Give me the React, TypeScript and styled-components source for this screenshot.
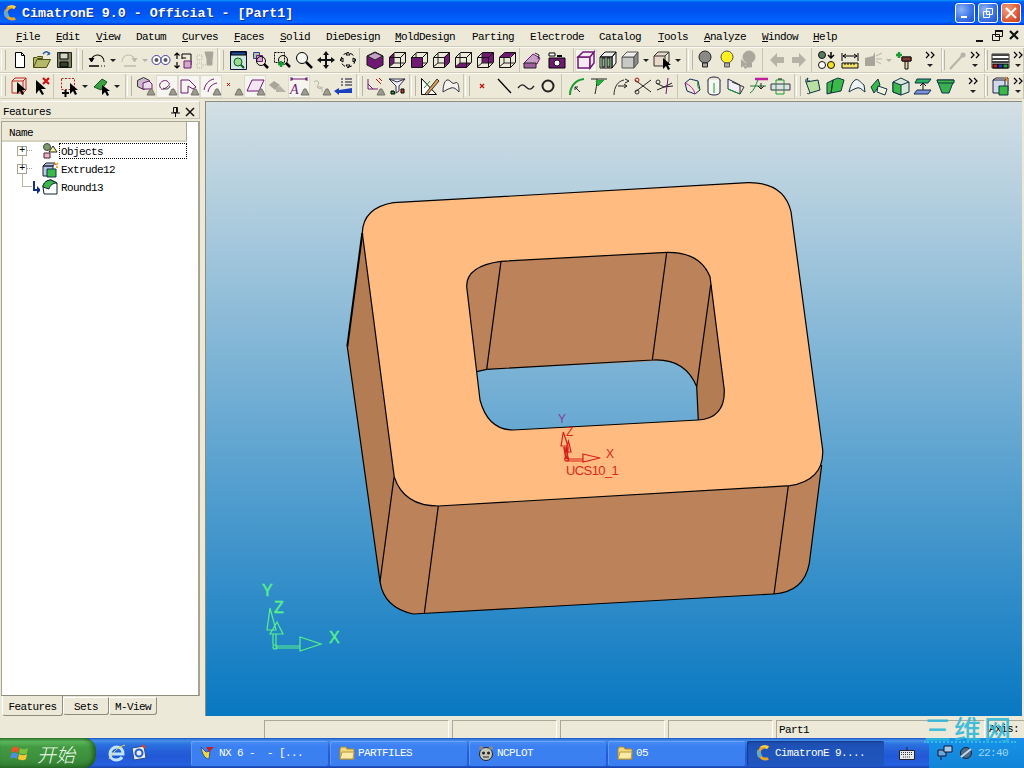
import React from "react";
import styled, { createGlobalStyle } from "styled-components";

const Global = createGlobalStyle`
  html, body { margin: 0; padding: 0; background: #ece9d8; }
  * { box-sizing: border-box; }
`;

const mono = `"Liberation Mono", "DejaVu Sans Mono", monospace`;

const Root = styled.div`
  position: relative;
  width: 1024px;
  height: 768px;
  overflow: hidden;
  display: flex;
  flex-direction: column;
  background: #ece9d8;
  font-family: ${mono};
  font-size: 11px;
  letter-spacing: -0.6px;
  color: #000;
`;

/* ---------- title bar ---------- */
const TitleBar = styled.div`
  height: 25px;
  flex: none;
  display: flex;
  align-items: center;
  padding: 0 3px 0 3px;
  background: linear-gradient(#0997ff 0, #0058ee 9%, #0050ee 40%, #0066ff 86%, #005bff 92%, #003dd7 96%, #003dd7 100%);
`;
const TitleText = styled.div`
  margin-left: 3px;
  padding-top: 2px;
  font-size: 13.3px;
  font-weight: bold;
  letter-spacing: 0;
  color: #fff;
  white-space: pre;
  text-shadow: 1px 1px 0 #0f2f9c;
  flex: 1;
`;
const WinButton = styled.div<{ $close?: boolean }>`
  width: 20px;
  height: 20px;
  margin-left: 3px;
  border: 1px solid #fff;
  border-radius: 3px;
  display: flex;
  align-items: center;
  justify-content: center;
  background: ${(p) =>
    p.$close
      ? "radial-gradient(circle at 30% 30%, #f0a080, #e2603a 55%, #c0391a)"
      : "radial-gradient(circle at 30% 30%, #8db4f5, #3e74e6 55%, #2250c8)"};
`;

/* ---------- menu ---------- */
const MenuBar = styled.div`
  height: 22px;
  flex: none;
  display: flex;
  align-items: center;
  padding-left: 16px;
  border-bottom: 1px solid #d0cdbc;
`;
const MenuItem = styled.div<{ $w: number }>`
  width: ${(p) => p.$w}px;
  flex: none;
  white-space: pre;
  padding-top: 2px;
  u { text-underline-offset: 1px; }
`;
const MenuControls = styled.div`
  margin-left: auto;
  display: flex;
  align-items: center;
  padding-right: 1px;
  gap: 1px;
`;

/* ---------- toolbars ---------- */
const ToolRow = styled.div`
  height: 26px;
  flex: none;
  display: flex;
  border-top: 1px solid #fbfaf5;
  border-bottom: 1px solid #cfccba;
`;
const Band = styled.div<{ $w: number }>`
  width: ${(p) => p.$w}px;
  flex: none;
  display: flex;
  align-items: center;
  border-right: 1px solid #c8c5b3;
`;
const Lead = styled.div<{ $w: number; $grip?: boolean }>`
  width: ${(p) => p.$w}px;
  flex: none;
  height: 20px;
  display: flex;
  justify-content: flex-end;
  padding-right: ${(p) => Math.max(p.$w - 6, 1)}px;
  &::before {
    content: "";
    display: ${(p) => (p.$grip ? "block" : "none")};
    width: 3px;
    border-left: 1px solid #fff;
    border-right: 1px solid #b8b5a4;
    background: #ece9d8;
  }
`;
const ToolButton = styled.div<{ $w: number; $on?: boolean }>`
  width: ${(p) => p.$w}px;
  height: 23px;
  flex: none;
  display: flex;
  align-items: center;
  justify-content: center;
  background: ${(p) => (p.$on ? "#f6f5ef" : "transparent")};
  box-shadow: ${(p) => (p.$on ? "inset 0 0 0 1px #dcdacb" : "none")};
`;

/* ---------- main ---------- */
const Main = styled.div`
  flex: 1;
  min-height: 0;
  display: flex;
  padding: 2px 2px 0 0;
`;
const Panel = styled.div`
  width: 200px;
  flex: none;
  display: flex;
  flex-direction: column;
  padding-left: 1px;
`;
const PanelHeader = styled.div`
  height: 18px;
  flex: none;
  padding: 3px 4px 0 2px;
  display: flex;
  align-items: center;
  justify-content: space-between;
  border-top: 1px solid #fff;
  border-bottom: 1px solid #c8c5b3;
  border-right: 1px solid #c8c5b3;
`;
const HeaderIcons = styled.div`
  display: flex;
  gap: 4px;
`;
const TreeBox = styled.div`
  flex: 1;
  min-height: 0;
  margin-top: 2px;
  background: #fff;
  border: 1px solid #a6a392;
  border-right-width: 2px;
  border-bottom: 1px solid #8f8c7c;
`;
const ColumnHeader = styled.div`
  width: 185px;
  height: 20px;
  padding: 3px 0 0 7px;
  display: flex;
  align-items: center;
  background: #ece9d8;
  border-bottom: 2px solid #d6d2c0;
  border-right: 1px solid #aca899;
`;
const TreeRow = styled.div`
  height: 18px;
  display: flex;
  align-items: center;
`;
const Indent = styled.div`
  width: 38px;
  flex: none;
  height: 18px;
  position: relative;
`;
const Expander = styled.div`
  position: absolute;
  left: 15px;
  top: 4px;
  width: 10px;
  height: 10px;
  background: #fff;
  border: 1px solid #a6a392;
  display: flex;
  align-items: center;
  justify-content: center;
  font-size: 10px;
  line-height: 1;
  z-index: 1;
  &::after {
    content: "";
    position: absolute;
    left: 9px;
    top: 3px;
    width: 5px;
    border-top: 1px dotted #a6a392;
  }
`;
const TreeLine = styled.div<{ $h: number; $top?: number; $elbow?: boolean }>`
  position: absolute;
  left: 20px;
  top: ${(p) => p.$top ?? 0}px;
  height: ${(p) => p.$h}px;
  width: 10px;
  border-left: 1px solid #b8b5a4;
  border-bottom: ${(p) => (p.$elbow ? "1px solid #b8b5a4" : "none")};
`;
const Label = styled.div<{ $focus?: boolean }>`
  width: 128px;
  height: 16px;
  padding: 2px 0 0 1px;
  border: 1px dotted ${(p) => (p.$focus ? "#000" : "transparent")};
  white-space: pre;
`;
const TreeIcon = styled.div`
  width: 19px;
  flex: none;
  display: flex;
  justify-content: flex-end;
`;
const ArrowGlyph = styled.svg`
  display: block;
`;
const Tabs = styled.div`
  height: 20px;
  flex: none;
  display: flex;
  padding-left: 1px;
`;
const Tab = styled.div<{ $w: number; $on?: boolean }>`
  width: ${(p) => p.$w}px;
  height: ${(p) => (p.$on ? 20 : 18)}px;
  display: flex;
  align-items: center;
  justify-content: center;
  padding-top: ${(p) => (p.$on ? 2 : 1)}px;
  margin-top: ${(p) => (p.$on ? 0 : 1)}px;
  border: 1px solid #8f8c7c;
  border-left-color: #fff;
  border-top-color: #fff;
  border-radius: 0 0 3px 3px;
  border-top-width: ${(p) => (p.$on ? 0 : 1)}px;
  background: #ece9d8;
`;
const Viewport = styled.div`
  flex: 1;
  margin-left: 5px;
  min-width: 0;
  background: linear-gradient(#d3dfe4, #0878c2);
  border-left: 1px solid #8f8c7c;
  border-top: 1px solid #8f8c7c;
`;
const ModelSvg = styled.svg`
  display: block;
  width: 100%;
  height: 100%;
`;

/* ---------- status ---------- */
const StatusBar = styled.div`
  height: 22px;
  flex: none;
  display: flex;
  align-items: flex-end;
  padding-left: 264px;
  gap: 3px;
`;
const StatusCell = styled.div<{ $w: number }>`
  width: ${(p) => p.$w}px;
  height: 18px;
  flex: none;
  padding: 3px 0 0 2px;
  white-space: pre;
  border-top: 1px solid #aca899;
  border-left: 1px solid #aca899;
  border-right: 1px solid #fff;
`;

/* ---------- task bar ---------- */
const TaskBar = styled.div`
  height: 30px;
  flex: none;
  display: flex;
  align-items: stretch;
  color: #fff;
  background: linear-gradient(#1f4fc0 0, #3682e5 6%, #4490e6 10%, #3883e5 14%, #2b71e0 22%, #2663da 40%, #2258d5 60%, #245ddb 82%, #2562df 88%, #2158d4 93%, #1941a5 100%);
`;
const StartButton = styled.div`
  width: 96px;
  flex: none;
  display: flex;
  align-items: center;
  padding-left: 10px;
  gap: 7px;
  border-radius: 0 12px 12px 0;
  background: linear-gradient(#3a8a3a 0, #5cb85c 12%, #429a42 30%, #3c8f3c 70%, #2f7a2f 100%);
  box-shadow: inset -3px 0 4px rgba(0, 40, 0, 0.5);
`;
const StartText = styled.span`
  font-family: "Noto Sans CJK SC", sans-serif;
  font-size: 19px;
  font-weight: 300;
  font-style: italic;
  letter-spacing: 0;
  color: #f4fff0;
`;
const Quick = styled.div`
  width: 95px;
  flex: none;
  display: flex;
  align-items: center;
  padding-left: 11px;
  gap: 2px;
`;
const TaskButtons = styled.div`
  display: flex;
  gap: 2px;
  align-items: center;
`;
const TaskButton = styled.div<{ $on?: boolean }>`
  width: 137px;
  height: 25px;
  display: flex;
  align-items: center;
  gap: 3px;
  padding-left: 9px;
  border-radius: 2px;
  white-space: pre;
  background: ${(p) =>
    p.$on
      ? "linear-gradient(#1b4aa8, #1e52b7 20%, #1f56bf)"
      : "linear-gradient(#4a8cf5, #3c81f3 20%, #3a7ef0)"};
  box-shadow: ${(p) => (p.$on ? "inset 1px 1px 1px #143c8c" : "inset 1px 1px 0 rgba(255,255,255,.2)")};
`;
const Keyboard = styled.div`
  width: 45px;
  flex: none;
  display: flex;
  align-items: center;
  justify-content: center;
`;
const Tray = styled.div`
  flex: 1;
  display: flex;
  align-items: center;
  gap: 4px;
  padding-left: 8px;
  background: linear-gradient(#1e8ee8, #1590e6 20%, #1284d8);
  color: #9fd6f8;
`;
const Watermark = styled.div`
  position: absolute;
  left: 924px;
  top: 716px;
  width: 92px;
  height: 27px;
  font-family: "Noto Sans CJK SC", sans-serif;
  font-size: 27px;
  font-weight: 500;
  line-height: 25px;
  letter-spacing: 3px;
  white-space: pre;
  color: rgba(44, 183, 217, 0.9);
  border-bottom: 2px dotted rgba(60, 200, 230, 0.8);
`;
const AxisText = styled.div`
  position: absolute;
  left: 989px;
  top: 723px;
  white-space: pre;
`;

/* ---------- drawing helpers ---------- */
const Ico: React.FC<{ w?: number; h?: number; children: React.ReactNode }> = ({ w = 22, h = 22, children }) => (
  <svg width={w} height={h} viewBox={`0 0 ${w} ${h}`} fill="none">
    {children}
  </svg>
);
const P: React.FC<{ d: string; s?: string; f?: string; w?: number; dash?: string }> = ({ d, s = "#000", f = "none", w = 1, dash }) => (
  <path d={d} stroke={s} fill={f} strokeWidth={w} strokeDasharray={dash} />
);
const purple = "#701a73";
const Cube: React.FC<{ front?: string; top?: string; right?: string; left?: string; bottom?: string; back?: string }> = ({ front, top, right, left, bottom, back }) => (
  <>
    {back && <P d="M8 4h11v10H8z" f={back} s="none" />}
    {left && <P d="M3 8l5-4v10l-5 4z" f={left} s="none" />}
    {bottom && <P d="M3 18l5-4h11l-5 4z" f={bottom} s="none" />}
    <P d="M8 4v10h11M8 14l-5 4" s="#222" />
    {front && <P d="M3 8h11v10H3z" f={front} s="none" />}
    {top && <P d="M3 8l5-4h11l-5 4z" f={top} s="none" />}
    {right && <P d="M14 8l5-4v10l-5 4z" f={right} s="none" />}
    <P d="M3.5 8.5h11v10h-11zM3.5 8.5l5-5h11l-5 5M14.5 18.5l5-5v-10" s="#111" />
  </>
);
const Marker = () => <P d="M13 20l3-6h2l3 6z" f="#9c9a8e" s="#77756a" />;
const Bulb: React.FC<{ f: string; s?: string }> = ({ f, s = "#222" }) => (
  <>
    <circle cx="11" cy="8" r="6" fill={f} stroke={s} />
    <P d="M8.500 14h5v4h-5z" f="#aaa89c" s={s} />
  </>
);
const Logo: React.FC<{ size?: number }> = ({ size = 16 }) => (
  <svg width={size} height={size} viewBox="0 0 16 16">
    <path d="M13 1.500A7.500 7.500 0 1 0 13 14.500L11 12A4.500 4.500 0 1 1 11 4z" fill="#eda423" />
    <path d="M13 1.500A7.500 7.500 0 0 0 3 2.800 7 7 0 0 1 11 4z" fill="#f8d040" />
    <path d="M3 13A7.500 7.500 0 0 1 2 4L5 8 6 11z" fill="#6aa8c0" />
  </svg>
);
const Folder = () => (
  <svg width="16" height="14" viewBox="0 0 16 14">
    <path d="M1 3l1-2h5l1 2h7v10H1z" fill="#f4d67a" stroke="#a88a30" />
    <path d="M1 13l2-7h12l-1 7z" fill="#fbe9a8" stroke="#b89838" />
  </svg>
);

const icons: Record<string, React.ReactNode> = {
  new: <><P d="M6.500 3.500h6l3 3v12h-9z" f="#fff" /><P d="M12.500 3.500v3h3" /></>,
  open: <><P d="M2.500 18.500v-10h3l1-1h5v2h-5l-4 9h13l4-8h-13" f="#b5b76a" s="#504f10" /><P d="M12 5c2-3 5-3 6 0" s="#2a5aa0" w={1.500} /><P d="M16 6l3-1-1-2" s="#2a5aa0" /></>,
  save: <><P d="M4.500 3.500h14v15h-14z" f="#7e8264" s="#222" /><P d="M7 4h8v6H7z" f="#d8d8c8" /><P d="M7 13h8v5H7z" f="#3a3c2c" /></>,
  undo: <><P d="M5 12a6 6 0 1 1 13 1" w={1.100} /><P d="M3 9l2.500 4 2.500-4" f="#000" s="#000" /><P d="M3 17h10" w={1.500} /><P d="M15 17h1M18 17h1" /></>,
  redo: <><P d="M17 12a6 6 0 1 0-13 1" s="#bdbbae" w={1.100} /><P d="M19 9l-2.500 4-2.500-4" f="#bdbbae" s="#bdbbae" /><P d="M6 17h12" s="#bdbbae" w={1.500} /></>,
  glasses: <><circle cx="6.500" cy="11" r="4.500" fill="#fff" stroke="#3a3a9c" /><circle cx="15.500" cy="11" r="4.500" fill="#fff" stroke="#3a3a9c" /><circle cx="6.500" cy="11" r="2" fill="#556" /><circle cx="15.500" cy="11" r="2" fill="#556" /></>,
  swap: <><P d="M5 4v6M2.500 6.500L5 4l2.500 2.500M5 19v-6M2.500 16.500L5 19l2.500-2.500" w={1.200} /><P d="M10 5h9v11" /><P d="M10 5v5" /><P d="M12 12h7v7h-7z" f="#d0a8c8" s={purple} /><P d="M10 9h4" /></>,
  swapOff: <><P d="M3 6h5v5H3zM3 14h5v5H3z" s="#b9b7a8" dash="1 1" /><P d="M11 3h8l-1 8v5h-5v-6z" f="#a8a69a" s="#a8a69a" /><P d="M9 16h8" s="#b9b7a8" dash="1 1" /></>,
  screen: <><P d="M3.500 2.500h16v18h-16z" f="#cfe8d8" s="#114" /><P d="M4 3h15v3H4z" f="#2050a0" /><circle cx="11" cy="13" r="4" fill="#9bd890" stroke="#0a5a30" /><P d="M14 16l3 3" s="#0a5a30" w={2} /></>,
  zoomSel: <><P d="M4.500 3.500h6v6h-6z" f="#a8c8a0" s="#3a3a9c" /><P d="M7.500 6.500h6v6h-6z" f="#d0a8d0" s={purple} /><circle cx="12" cy="12" r="4.500" stroke="#000" /><P d="M15 15l4 4" w={2.500} /></>,
  zoomAdd: <><P d="M3.500 3.500h10v10h-10z" dash="2 1" /><circle cx="12" cy="11" r="4.500" stroke="#000" /><P d="M15 14l4 4" w={2.500} /><P d="M7 15h6M10 12v6" s="#1a9a30" w={2.500} /></>,
  zoom: <><circle cx="9" cy="9" r="5.500" stroke="#000" fill="#f8f8f4" /><P d="M13 13l6 6" w={2.500} /></>,
  move: <P d="M11 2l3 4h-2v4h4V8l4 3-4 3v-2h-4v4h2l-3 4-3-4h2v-4H6v2l-4-3 4-3v2h4V6H8z" f="#111" s="none" />,
  orbit: <><P d="M11 3l2 3h-4zM11 19l2-3H9zM3 11l3-2v4zM19 11l-3-2v4z" f="#fff" /><circle cx="11" cy="11" r="7" stroke="#000" strokeDasharray="4 3" /></>,
  cube1: <><P d="M3 7l8-4 8 4v9l-8 4-8-4z" f={purple} s="#111" /><P d="M3.500 7l7.500-3.500 7.500 3.500-7.500 4z" f="#c8a0c8" s="#222" /></>,
  cube2: <Cube left={purple} />,
  cube3: <Cube front={purple} />,
  cube4: <Cube right={purple} />,
  cube5: <Cube bottom={purple} />,
  cube6: <Cube back={purple} />,
  cube7: <Cube top={purple} />,
  sect: <><P d="M3 14l9-9 7 4-3 6H3z" f="#c8a0c8" s={purple} /><P d="M3 14h12v5H3z" f="#a060a0" s="#222" /><P d="M14 4l4 2-1 4" s="#222" /></>,
  cam: <><P d="M3 9h16v10H3z" f={purple} /><circle cx="11" cy="14" r="3" fill="#fff" stroke="#111" /><P d="M3 4h6v3H3z" f="#fff" /><P d="M11 7h5" w={2} /></>,
  shaded: <><P d="M3 8h12v11H3z" f="#f5e9f3" s={purple} w={1.500} /><P d="M3 8l5-5h11l-4 5zM15 8l4-5v11l-4 5z" f="#f5e9f3" s={purple} w={1.500} /></>,
  hidden: <><P d="M3 8h12v11H3zM3 8l5-5h11l-4 5zM15 8l4-5v11l-4 5z" s="#111" f="#eee" /><P d="M5 9h3v9H5zM10 9h3v9h-3z" f="#7ab87a" s="#111" /></>,
  gcube: <><P d="M3 8h12v11H3z" f="#c8c8c4" s="#555" /><P d="M3 8l5-5h11l-4 5z" f="#eee" s="#555" /><P d="M15 8l4-5v11l-4 5z" f="#8a8a86" s="#555" /></>,
  gcubeArrow: <><P d="M3 7h11v10H3zM3 7l4-4h11l-4 4M14 17l4-4V3" s="#333" f="#e8d8c8" /><P d="M12 9v11l3-3 2 4 2-1-2-4h3z" f="#000" s="none" /></>,
  bulbGray: <Bulb f="#8a8a84" />,
  bulbYellow: <Bulb f="#fff020" s="#555" />,
  bulbOff: <><Bulb f="#aaa89c" s="#aaa89c" /><P d="M3 10v9l2-2 2 3 2-1-2-3h3z" f="#aaa89c" s="none" /></>,
  left: <P d="M4 11l7-7v4h7v6h-7v4z" f="#b5b3a6" s="none" />,
  right: <P d="M18 11l-7-7v4H4v6h7v4z" f="#b5b3a6" s="none" />,
  balls: <><circle cx="6" cy="6" r="3.500" fill="#5a7a60" stroke="#111" /><circle cx="6" cy="16" r="3.500" fill="#fff" stroke="#111" /><circle cx="15" cy="16" r="3.500" fill="#f4e020" stroke="#111" /><P d="M15 3v6M12 6l3 3 3-3" w={1.500} /></>,
  ruler: <><P d="M3 4v8M19 4v8M4 7h14M7 5l-3 2 3 2M15 5l3 2-3 2" /><P d="M3 14h16v5H3z" f="#f0e070" s="#111" /><P d="M6 14v2M9 14v2M12 14v2M15 14v2" /></>,
  smoke: <><P d="M3 9l8-2 2-4v14H3z" f="#a8a69a" s="none" /><P d="M14 7l6-3M14 10h6M14 12l5 3" s="#b5b3a6" /></>,
  hammer: <><P d="M8 8h9v4H8zM11 12h3v8h-3z" f="#e8d0a0" s="#111" /><P d="M8 8h9v4H8z" f="#803830" s="#111" /><P d="M2 6h6M5 3v6" s="#1a9a30" w={2.500} /></>,
  wand: <><P d="M4 20L16 7" s="#b5b3a6" w={2} /><circle cx="17" cy="6" r="2.500" fill="#b5b3a6" /></>,
  grid: <><P d="M3 5h17v14H3z" f="#fff" s="#333" /><P d="M3 5h17v2H3zM3 9h17v2H3zM3 12h17v2H3z" f="#444" s="none" /><P d="M4 15h5v4H4z" f="#c02020" /><P d="M9 15h5v4H9z" f="#2040c0" /><P d="M14 15h5v4h-5z" f="#20a040" /></>,
  pick: <><P d="M4 6h11v12H4zM4 6l3-3h11l-3 3M15 18l3-3V3" s="#c02020" /><P d="M9 7v12l3-3 2 4 2-1-2-4h4z" f="#000" s="none" /></>,
  clear: <><P d="M6 5v14l3-4 3 5 2-1-3-5h5z" f="#000" s="none" /><P d="M13 3l6 6M19 3l-6 6" s="#d01010" w={2.200} /></>,
  boxAdd: <><P d="M3.500 3.500h13v11h-13z" s="#b02020" dash="2 1.500" /><P d="M12 8v11l3-3 2 4 2-1-2-4h3z" f="#000" s="none" /><P d="M4 18h7M7.500 15v7" w={2} /></>,
  pin: <><P d="M4 12l8-8 5 3-6 8z" f="#3aa040" s="#145a20" /><P d="M12 10v10l3-3 2 4 2-1-2-4h3z" f="#000" s="none" /></>,
  f1: <><P d="M3.500 5.500l6-3 6 3v6l-6 3-6-3z" f="#cbb8cb" s="#333" /><P d="M9 8l6-2 3 3v5H9z" f="#e8dde8" s={purple} /><Marker /></>,
  f2: <><P d="M4 12c-2-4 4-8 7-6s3 4 0 6-5 4-7 0" s={purple} /><P d="M7 13c3 2 6 1 7-2" s="#333" /><Marker /></>,
  f3: <><P d="M3 5h8l7 7-3 2-5-3v7H3z" s={purple} /><Marker /></>,
  f4: <><P d="M4 15C5 9 9 5 14 4M8 17c1-5 4-8 9-9" s={purple} /><Marker /></>,
  f5: <><P d="M5 8l3 3M8 8l-3 3" s="#c01010" /><Marker /></>,
  f6: <><P d="M3 16L8 5h12l-5 11z" s={purple} f="#f5e5f5" /><Marker /></>,
  f7: <><P d="M3 10l5-4 6 4-5 5z" f="#a8a69a" s="none" /><P d="M10 13l4-2 6 6H10z" f="#b5b3a6" s="none" /></>,
  f8: <><P d="M3 4h16M3 2v4M19 2v4" s={purple} /><P d="M5 5l-2-1 2-1M17 5l2-1-2-1" s={purple} /><text x="2" y="19" fontFamily="Liberation Serif, serif" fontSize="14" fontStyle="italic" fill={purple}>A</text><Marker /></>,
  f9: <><P d="M4 7c3-3 6 0 4 3s2 5 5 2M7 13c3-3 6 0 5 4" s="#b5b3a6" /><Marker /></>,
  f10: <><P d="M9 4h2M13 4h7M9 7h2M13 7h7M9 10h2M13 10h7" s="#113" /><P d="M20 13v5H7v2l-5-4 5-3v2z" f="#1a40c0" s="none" /></>,
  g1: <><P d="M4 4v10h10M4 9l5 5" s={purple} /><P d="M12 4l5 5M15 3l3 3" s="#c01010" /><Marker /></>,
  g2: <><P d="M3 4h16l-6 7v5l-3 2v-7z" f="#f0f0f8" s="#334" /><P d="M3 4l8 3 8-3" s="#334" /><P d="M5 16h3l1 3H5z" f="#1a9a30" /><P d="M15 14h3v4h-3z" f="#c04020" /></>,
  h1: <><P d="M3.500 3.500v16h15z" f="#fff" /><P d="M7 19L19 4l2 2L9 20z" f="#e0a050" s="#333" /><P d="M12 6l-6 7" s="#1a9a30" /></>,
  h2: <P d="M3 17c0-5 1-11 4-12s5 5 8 3 4 2 4 9c-3-3-5-5-8-4s-5 2-8 4z" s="#334" f="#f4f2ea" />,
  dot: <P d="M9 9l4 4M13 9l-4 4" s="#c01010" w={1.300} />,
  line: <P d="M5 4l13 14" w={1.300} />,
  wave: <P d="M3 13c3-4 5-4 8-1s5 3 8-1" s="#222" w={1.300} />,
  circle: <circle cx="11" cy="11" r="5.500" stroke="#222" strokeWidth="2" />,
  k1: <><P d="M4 20C4 12 9 5 18 4" s="#1a9a30" w={2} /><P d="M9 12l5 5M9 15v-3h3" s="#223" /></>,
  k2: <><P d="M3 4h16" s="#222" /><P d="M9 4c0 5-1 10-2 15" s="#222" /><P d="M8 6l8-1-6 6z" f="#2ab040" s="#1a9a30" /></>,
  k3: <><P d="M4 20C4 12 8 6 14 5" s="#333" /><P d="M15 4l4 2-4 2M8 11h9M14 9l3 2-3 2" s="#222" /></>,
  k4: <><P d="M3 5l16 12M19 5L3 17" s="#222" /><circle cx="5" cy="17" r="2" stroke="#333" /><circle cx="5" cy="5" r="2" stroke="#c01010" /></>,
  k5: <><P d="M2 8l8 4 8-4M3 15l7-3 9-1" s="#222" /><P d="M14 3l-2 16" s={purple} /><circle cx="4" cy="7" r="2" stroke="#333" /></>,
  l1: <><P d="M4 8l5-4 8 2 2 9-5 4-8-3z" s="#1a2a60" /><P d="M4 8c5 2 9 6 10 11" s="#c020a0" /><P d="M17 6c-1 4 0 7 2 9" s="#1a9a30" /></>,
  l2: <><ellipse cx="11" cy="5" rx="6" ry="3" stroke="#224" /><P d="M5 5v12c0 4 12 4 12 0V5" s="#224" f="#f4f8f0" /><P d="M11 8v10" s="#1a9a30" /></>,
  l3: <><P d="M3 4l12 6v9L3 14z" s="#224" f="#f0f0f8" /><P d="M7 7l12 5-4 7" s="#333" /><P d="M3 14l12 5" s="#1a9a30" /></>,
  l4: <><P d="M8 4h13" s="#c020a0" w={2.500} /><P d="M3 18c4-2 6-9 8-13M3 11h16" s="#1a7a30" /><P d="M14 8v6M11 11l3 3 3-3" s="#222" /></>,
  l5: <><P d="M2 9h19v6H2z" s="#334" f="#e0e0e8" /><P d="M7 5h8v14H7z" s="#1a9a30" /><P d="M9 4h4" s="#111" /></>,
  m1: <><P d="M4 7l12-2 2 10-10 3z" f="#b8e0a0" s="#134" /><P d="M4 7c-1-2 0-3 2-4M6 3l-1 3 3 0" s="#134" /><P d="M8 18c-1 1-2 1-3 0" s="#134" /></>,
  m2: <P d="M3 8l6-3-2 13-4 1zM9 5l5-2 6 2-3 11-10 2z" f="#3ab848" s="#134" />,
  m3: <P d="M3 17c1-5 3-10 6-12s6 3 9 5l1 7c-3-2-5-5-8-4s-5 2-8 4z" f="#eef4f4" s="#134" />,
  m4: <><P d="M3 12l7-8 2 6-6 8z" f="#3ab848" s="#134" /><P d="M10 11l9 3-2 6-8-3z" f="#f4f4e4" s="#134" /></>,
  m5: <><P d="M3 7l8-4 8 4v10l-8 3-8-3z" f="#d8e8d8" s="#134" /><P d="M3 7l8 3v10l-8-3z" f="#3ab848" s="#134" /><P d="M11 10l8-3" s="#134" /></>,
  m6: <><P d="M5 4h14l-3 4H3z" f="#2ab060" s="#134" /><P d="M5 15h14l-3 4H2z" f="#8090e0" s="#134" /><P d="M11 8v7M8 11l3-3 3 3" s="#111" /></>,
  m7: <><P d="M3 5h17l-5 13H8z" f="#38b050" s="#134" /><P d="M3 5h17v3H4z" f="#3ab848" s="#134" /></>,
  add: <><P d="M4 5h12v13H4z" f="#d0d8ec" s="#224" /><P d="M4 5l3-2h12l-3 2M16 18l3-2V3" s="#224" /><P d="M10 11h9v9h-9z" f="#3ab848" s="#134" /><P d="M16 2l2 2M19 4l-2 2" s="#e09010" w={1.500} /></>,
};

const caretIcon = <Ico w={10}><P d="M2 10h6l-3 3z" f="#222" s="none" /></Ico>;
const caretOff = <Ico w={10}><P d="M2 10h6l-3 3z" f="#b5b3a6" s="none" /></Ico>;
const chevIcon = (
  <Ico w={16}>
    <P d="M3 3l3 3-3 3M8 3l3 3-3 3" w={1.200} />
    <P d="M4 15h6l-3 3z" f="#222" s="none" />
  </Ico>
);

type Bandspec = { w: number; lead: number; grip?: boolean; items: string[] };
const n = (...names: string[]) => names;

const row1: Bandspec[] = [
  { w: 77, lead: 9, grip: true, items: n("new", "open", "save") },
  { w: 141, lead: 9, grip: true, items: n("undo", "^", "redo", "^off", "glasses", "swap", "swapOff") },
  { w: 142, lead: 9, grip: true, items: n("screen", "zoomSel", "zoomAdd", "zoom", "move", "orbit") },
  { w: 160, lead: 4, items: n("cube1", "cube2", "cube3", "cube4", "cube5", "cube6", "cube7") },
  { w: 54, lead: 1, items: n("sect", "~3", "cam") },
  { w: 113, lead: 0, items: n("*shaded", "hidden", "gcube", "^", "gcubeArrow", "^") },
  { w: 76, lead: 7, grip: true, items: n("bulbGray", "bulbYellow", "bulbOff") },
  { w: 49, lead: 3, items: n("left", "right") },
  { w: 130, lead: 4, items: n("balls", "~1", "ruler", "~1", "smoke", "^off", "hammer", "~7", "chev") },
  { w: 43, lead: 4, grip: true, items: n("wand", "chev") },
  { w: 39, lead: 4, grip: true, items: n("grid", "chev") },
];

const row2: Bandspec[] = [
  { w: 54, lead: 8, grip: true, items: n("pick", "clear") },
  { w: 72, lead: 4, items: n("boxAdd", "^", "pin", "^") },
  { w: 231, lead: 8, grip: true, items: n("f1", "*f2", "*f3", "*f4", "f5", "*f6", "f7", "*f8", "f9", "f10") },
  { w: 53, lead: 7, grip: true, items: n("g1", "g2") },
  { w: 54, lead: 8, grip: true, items: n("h1", "h2") },
  { w: 98, lead: 7, grip: true, items: n("dot", "line", "wave", "circle") },
  { w: 116, lead: 4, items: n("k1", "k2", "k3", "k4", "k5") },
  { w: 117, lead: 3, items: n("l1", "l2", "l3", "l4", "l5") },
  { w: 190, lead: 7, grip: true, items: n("m1", "m2", "m3", "m4", "m5", "m6", "m7", "~10", "chev") },
  { w: 39, lead: 4, grip: true, items: n("add", "chev") },
];

const Tool: React.FC<{ name: string }> = ({ name }) => {
  if (name.startsWith("~")) return <ToolButton $w={Number(name.slice(1))} />;
  if (name === "^") return <ToolButton $w={10}>{caretIcon}</ToolButton>;
  if (name === "^off") return <ToolButton $w={10}>{caretOff}</ToolButton>;
  if (name === "chev") return <ToolButton $w={16}>{chevIcon}</ToolButton>;
  const on = name.startsWith("*");
  const key = on ? name.slice(1) : name;
  return (
    <ToolButton $w={22} $on={on}>
      <Ico>{icons[key]}</Ico>
    </ToolButton>
  );
};

const Toolbar: React.FC<{ bands: Bandspec[] }> = ({ bands }) => (
  <ToolRow>
    {bands.map((b, i) => (
      <Band key={i} $w={b.w}>
        <Lead $w={b.lead} $grip={b.grip} />
        {b.items.map((it, j) => (
          <Tool key={j} name={it} />
        ))}
      </Band>
    ))}
  </ToolRow>
);

const menus: [string, string, number][] = [
  ["", "File", 40], ["", "Edit", 40], ["", "View", 40], ["Datum", "", 46], ["", "Curves", 52],
  ["", "Faces", 46], ["", "Solid", 46], ["DieDesign", "", 69], ["", "MoldDesign", 77], ["Parting", "", 58],
  ["Electrode", "", 69], ["Catalog", "", 59], ["", "Tools", 46], ["", "Analyze", 58], ["", "Window", 51], ["", "Help", 30],
];

const Model = () => {
  const top = "#ffbb80";
  const side = "#bc825a";
  const sideDark = "#b47c52";
  const e = "#000";
  const outer =
    "M362.300 233 Q363 208 393.300 202.700 L748 182.700 Q784 182 791 211.700 L822.700 450 Q824 480 790 485.700 L438.300 506 Q404 506 394.300 477.300 Z";
  const hole =
    "M501 261.300 L667 252.300 Q700 252 710 276.700 L724.300 390 Q725 418 698.300 420 L513.300 430 Q488 430 480 400 L466.700 286.700 Q466 266 501 261.300 Z";
  return (
    <ModelSvg viewBox="206 102 816 614" preserveAspectRatio="none">
      <path d="M362.300 233 L347.300 346.700 L380 581.700 Q384 608 413.300 614 L773.300 594 Q804 592 809.300 563.300 L821.700 465 L790 485.700 L438.300 506 L394.300 477.300 Z" fill={side} />
      <path d="M362.300 233 L347.300 346.700 L380 581.700 L394 477.300 Z" fill={sideDark} />
      <path d={outer} fill={top} />
      <clipPath id="holeClip"><path d={hole} /></clipPath>
      <g clipPath="url(#holeClip)">
        <rect x="206" y="102" width="816" height="614" fill="url(#holeBg)" />
        <path d="M460 240 L730 240 L730 430 L698 420 L696.700 386.700 Q688 362 660 360.700 L486.700 369.300 L476.700 371.700 Z" fill={side} />
        <path d="M710.700 285 L730 285 L730 425 L698 420 L696.700 386.700 Z" fill={sideDark} />
      </g>
      <defs>
        <linearGradient id="holeBg" x1="0" y1="102" x2="0" y2="716" gradientUnits="userSpaceOnUse">
          <stop offset="0" stopColor="#d3dfe4" />
          <stop offset="1" stopColor="#0878c2" />
        </linearGradient>
      </defs>
      <g fill="none" stroke={e} strokeWidth="1.200">
        <path d={outer} />
        <path d={hole} />
        <path d="M362.300 233 L347.300 346.700" strokeWidth="2" />
        <path d="M347.300 346.700 L380 581.700 Q384 608 413.300 614 L773.300 594 Q804 592 809.300 563.300 L821.700 465" />
        <path d="M394 477.300 L380 581.700 M438.300 506 L424.300 613.300 M788.300 486 L774 594" />
        <path d="M501 261.300 L486.700 369.300 M666.700 252.300 L652.300 360 M476.700 371.700 L486.700 369.300 L652.300 360 Q685 358 696.700 386.700 L698.300 420 M710.700 285 L696.700 386.700" />
      </g>
      <g fill="none" stroke="#d8201a" strokeWidth="1.200">
        <path d="M566.700 459 h16 M566.700 461 h16 M583 454 L600 458 L583 462 Z M561 446 L563.300 432 L568 446 Z" />
        <path d="M565 452 L568.500 441 L571 452 Z" />
        <path d="M564 447 L566 459 M566 447 L568 459 M568 447 L567 459" strokeWidth="1.600" />
        <circle cx="566.700" cy="459" r="2" />
      </g>
      <g fontFamily="Liberation Sans, sans-serif" fontSize="12" fill="#d8281c">
        <text x="558" y="423" fill="#8a4098">Y</text>
        <text x="566" y="436">Z</text>
        <text x="606" y="458">X</text>
        <text x="566" y="475" fontSize="13">UCS10_1</text>
      </g>
      <g fill="none" stroke="#58f088" strokeWidth="1.200">
        <path d="M275 646 h25 M275 648 h25 M300 637 L321 644 L300 651 Z M267 630 L270 608 L276 630 Z M270 634 L277 622 L283 634 Z M273 634 V645 M276 634 V645" />
        <circle cx="275" cy="647" r="2" />
      </g>
      <g fontFamily="Liberation Sans, sans-serif" fontSize="16" fill="#58f088" stroke="#58f088" strokeWidth="0.400">
        <text x="262" y="596">Y</text>
        <text x="274" y="613">Z</text>
        <text x="329" y="643">X</text>
      </g>
    </ModelSvg>
  );
};

const App = () => (
  <Root>
    <Global />
    <TitleBar>
      <Logo />
      <TitleText>CimatronE 9.0 - Official - [Part1]</TitleText>
      <WinButton>
        <svg width="14" height="14"><path d="M3 10h6v2H3z" fill="#fff" /></svg>
      </WinButton>
      <WinButton>
        <svg width="14" height="14" fill="none" stroke="#fff"><path d="M5.500 2.500h6v6h-6zM2.500 5.500h6v6h-6z" /></svg>
      </WinButton>
      <WinButton $close>
        <svg width="14" height="14" stroke="#fff" strokeWidth="2"><path d="M2 2l10 10M12 2L2 12" /></svg>
      </WinButton>
    </TitleBar>
    <MenuBar>
      {menus.map(([plain, ul, w]) => (
        <MenuItem key={plain + ul} $w={w}>
          {plain || (
            <>
              <u>{ul[0]}</u>
              {ul.slice(1)}
            </>
          )}
        </MenuItem>
      ))}
      <MenuControls>
        <svg width="16" height="14"><path d="M3 11h7v2H3z" fill="#111" /></svg>
        <svg width="16" height="14" fill="none" stroke="#111"><path d="M5.500 1.500h7v6h-7zM2.500 5.500h7v6h-7z" fill="#ece9d8" /><path d="M5 2h8" strokeWidth="2" /></svg>
        <svg width="16" height="14" stroke="#111" strokeWidth="2.200"><path d="M3 2l8 8M11 2l-8 8" /></svg>
      </MenuControls>
    </MenuBar>
    <Toolbar bands={row1} />
    <Toolbar bands={row2} />
    <Main>
      <Panel>
        <PanelHeader>
          <span>Features</span>
          <HeaderIcons>
            <svg width="12" height="12" fill="none" stroke="#111"><path d="M4.500 1.500h4v5h-4zM2 7h9M6.500 7v4" /><path d="M7.500 2v4" /></svg>
            <svg width="10" height="12" stroke="#111" strokeWidth="1.500"><path d="M1 2l8 8M9 2l-8 8" /></svg>
          </HeaderIcons>
        </PanelHeader>
        <TreeBox>
          <ColumnHeader>Name</ColumnHeader>
          <TreeRow>
            <Indent><TreeLine $h={36} $top={9} /><Expander>+</Expander></Indent>
            <TreeIcon>
              <svg width="18" height="16" fill="none">
                <circle cx="6" cy="4" r="3.500" fill="#7d9a6a" stroke="#444" />
                <path d="M12 3l4 6H8z" fill="#fbf6a0" stroke="#222" />
                <path d="M3 10h6v5H3z" fill="#e6b4d0" stroke="#522" />
              </svg>
            </TreeIcon>
            <Label $focus>Objects</Label>
          </TreeRow>
          <TreeRow>
            <Indent><TreeLine $h={18} /><Expander>+</Expander></Indent>
            <TreeIcon>
              <svg width="18" height="17" fill="none">
                <path d="M2 5h10v10H2zM2 5l3-3h9l-2 3z" fill="#b8c8e8" stroke="#223" />
                <path d="M6 8h9v8H6z" fill="#3ab848" stroke="#134" />
                <path d="M13 1l2 3M17 2l-2 2M17 6h-2" stroke="#e09010" strokeWidth="1.300" />
              </svg>
            </TreeIcon>
            <Label>Extrude12</Label>
          </TreeRow>
          <TreeRow>
            <Indent>
              <TreeLine $h={9} $elbow />
              <ArrowGlyph width="38" height="18">
                <path d="M31 3h2v8h2V8l4 4-4 4v-3h-4z" fill="#12308a" />
              </ArrowGlyph>
            </Indent>
            <TreeIcon>
              <svg width="18" height="17" fill="none">
                <path d="M2 8c0-4 4-7 8-7l6 3v11H3z" fill="#fff" stroke="#123" />
                <path d="M2 8c0-4 4-7 8-7l6 3c-4 0-7 2-8 6z" fill="#3ab848" stroke="#123" />
              </svg>
            </TreeIcon>
            <Label>Round13</Label>
          </TreeRow>
        </TreeBox>
        <Tabs>
          <Tab $w={61} $on>Features</Tab>
          <Tab $w={46}>Sets</Tab>
          <Tab $w={48}>M-View</Tab>
        </Tabs>
      </Panel>
      <Viewport>
        <Model />
      </Viewport>
    </Main>
    <StatusBar>
      <StatusCell $w={185} />
      <StatusCell $w={105} />
      <StatusCell $w={105} />
      <StatusCell $w={105} />
      <StatusCell $w={209}>Part1</StatusCell>
      <StatusCell $w={38} />
    </StatusBar>
    <TaskBar>
      <StartButton>
        <svg width="20" height="20" viewBox="0 0 20 20">
          <path d="M2 5c3-2 5-1 7 0l-1 5c-2-1-4-2-7 0z" fill="#e8552a" />
          <path d="M10 5c2 1 4 2 8 0l-1 5c-3 2-6 1-8 0z" fill="#7cc040" />
          <path d="M1 11c3-2 5-1 7 0l-1 5c-2-1-4-2-7 0z" fill="#4a90e0" />
          <path d="M9 11c2 1 4 2 8 0l-1 5c-3 2-6 1-8 0z" fill="#f8c830" />
        </svg>
        <StartText>开始</StartText>
      </StartButton>
      <Quick>
        <svg width="20" height="20" viewBox="0 0 20 20" fill="none">
          <path d="M3 11h13c0-4-2-7-6-7S3 7 3 11c0 4 3 6 6 6 3 0 5-1 6-3" stroke="#bfe4ff" strokeWidth="3" />
          <path d="M2 16C5 10 11 4 18 2" stroke="#f0d040" />
        </svg>
        <svg width="20" height="20" viewBox="0 0 20 20" fill="none">
          <path d="M3 5l12-2 2 12-12 2z" fill="#e8eef8" stroke="#284a88" />
          <circle cx="10" cy="10" r="3.500" stroke="#2860c0" strokeWidth="2" />
          <path d="M13 2l3 3" stroke="#e04020" strokeWidth="2" />
        </svg>
      </Quick>
      <TaskButtons>
        <TaskButton>
          <svg width="16" height="16" viewBox="0 0 16 16" fill="none">
            <path d="M1 2l5 5 4-1-1 8C5 14 2 9 1 2z" fill="#f0d840" stroke="#3050a0" />
            <path d="M6 2h8L9 7z" fill="#c82020" />
          </svg>
          {"NX 6 -  - [..."}
        </TaskButton>
        <TaskButton><Folder />PARTFILES</TaskButton>
        <TaskButton>
          <svg width="16" height="16" viewBox="0 0 16 16">
            <circle cx="8" cy="9" r="6.500" fill="#c8c8b8" stroke="#222" />
            <circle cx="3" cy="3" r="2" fill="#888" /><circle cx="13" cy="3" r="2" fill="#888" />
            <circle cx="5.500" cy="8" r="1.500" fill="#222" /><circle cx="10.500" cy="8" r="1.500" fill="#222" />
            <path d="M5 12h6" stroke="#222" />
          </svg>
          NCPLOT
        </TaskButton>
        <TaskButton><Folder />05</TaskButton>
        <TaskButton $on><Logo />CimatronE 9....</TaskButton>
      </TaskButtons>
      <Keyboard>
        <svg width="16" height="14" viewBox="0 0 16 14">
          <path d="M.5 4.500h15v9H.5z" fill="#e8e8e8" stroke="#223" />
          <path d="M2 6.500h12M2 8.500h12M4 11h8" stroke="#334" strokeDasharray="1 1" />
          <path d="M8 4V1" stroke="#223" />
        </svg>
      </Keyboard>
      <Tray>
        <svg width="17" height="16" viewBox="0 0 17 16" fill="none">
          <path d="M1 5h8v6H1z" fill="#6ea8d8" stroke="#113" />
          <path d="M7 1h8v6H7z" fill="#a8c8e8" stroke="#113" />
          <path d="M4 12v3" stroke="#113" />
        </svg>
        <svg width="16" height="16" viewBox="0 0 16 16" fill="none">
          <circle cx="8" cy="8" r="5.500" fill="#4a6a8a" stroke="#123" />
          <path d="M3 12L13 4" stroke="#c8d8e8" strokeWidth="2" />
        </svg>
        <span>22:40</span>
      </Tray>
    </TaskBar>
    <AxisText>Axis:</AxisText>
    <Watermark>三维网</Watermark>
  </Root>
);

export default App;
